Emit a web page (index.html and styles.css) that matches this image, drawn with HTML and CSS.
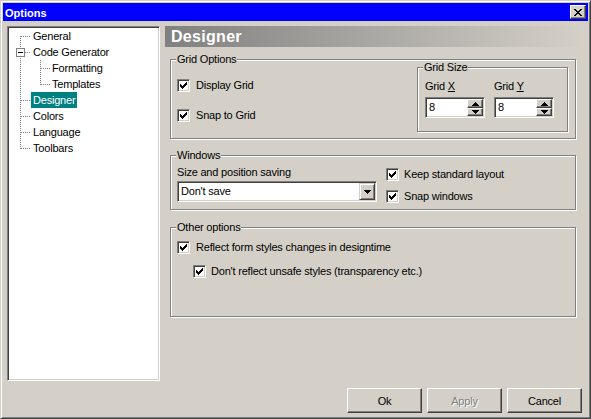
FILE: index.html
```html
<!DOCTYPE html>
<html>
<head>
<meta charset="utf-8">
<title>Options</title>
<link rel="stylesheet" href="styles.css">
</head>
<body>
<div class="window">
  <div class="titlebar">
    <span class="title">Options</span>
    <button class="close" type="button"><svg width="8" height="7" viewBox="0 0 8 7"><path d="M0 0h2v1H0zM6 0h2v1H6zM1 1h2v1H1zM5 1h2v1H5zM2 2h4v1H2zM3 3h2v1H3zM2 4h4v1H2zM1 5h2v1H1zM5 5h2v1H5zM0 6h2v1H0zM6 6h2v1H6z"/></svg></button>
  </div>
  <div class="client">
    <div class="main">
      <div class="tree">
        <div class="row">
          <svg class="tl" width="22" height="16"><line x1="11.5" y1="8" x2="11.5" y2="16"/><line x1="12" y1="8.5" x2="22" y2="8.5"/></svg>
          <span class="label">General</span>
        </div>
        <div class="row">
          <svg class="tl" width="22" height="16"><line x1="11.5" y1="0" x2="11.5" y2="4"/><line x1="11.5" y1="14" x2="11.5" y2="16"/><line x1="16" y1="8.5" x2="22" y2="8.5"/><rect class="box" x="7.5" y="4.5" width="8" height="8"/><rect class="minus" x="9" y="8" width="5" height="1"/></svg>
          <span class="label">Code Generator</span>
        </div>
        <div class="row">
          <svg class="tl" width="41" height="16"><line x1="11.5" y1="0" x2="11.5" y2="16"/><line x1="31.5" y1="0" x2="31.5" y2="16"/><line x1="32" y1="8.5" x2="41" y2="8.5"/></svg>
          <span class="label">Formatting</span>
        </div>
        <div class="row">
          <svg class="tl" width="41" height="16"><line x1="11.5" y1="0" x2="11.5" y2="16"/><line x1="31.5" y1="0" x2="31.5" y2="9"/><line x1="32" y1="8.5" x2="41" y2="8.5"/></svg>
          <span class="label">Templates</span>
        </div>
        <div class="row">
          <svg class="tl" width="22" height="16"><line x1="11.5" y1="0" x2="11.5" y2="16"/><line x1="12" y1="8.5" x2="22" y2="8.5"/></svg>
          <span class="label selected">Designer</span>
        </div>
        <div class="row">
          <svg class="tl" width="22" height="16"><line x1="11.5" y1="0" x2="11.5" y2="16"/><line x1="12" y1="8.5" x2="22" y2="8.5"/></svg>
          <span class="label">Colors</span>
        </div>
        <div class="row">
          <svg class="tl" width="22" height="16"><line x1="11.5" y1="0" x2="11.5" y2="16"/><line x1="12" y1="8.5" x2="22" y2="8.5"/></svg>
          <span class="label">Language</span>
        </div>
        <div class="row">
          <svg class="tl" width="22" height="16"><line x1="11.5" y1="0" x2="11.5" y2="9"/><line x1="12" y1="8.5" x2="22" y2="8.5"/></svg>
          <span class="label">Toolbars</span>
        </div>
      </div>

      <div class="panel">
        <div class="header">Designer</div>

        <div class="group g-grid">
          <span class="gtitle">Grid Options</span>
          <div class="gbody">
            <div class="checks">
              <label class="chk"><span class="cb"><svg width="11" height="11" viewBox="0 0 11 11"><path d="M2 4h1v3H2zM3 5h1v3H3zM4 6h1v3H4zM5 5h1v3H5zM6 4h1v3H6zM7 3h1v3H7zM8 2h1v3H8z"/></svg></span><span>Display Grid</span></label>
              <label class="chk"><span class="cb"><svg width="11" height="11" viewBox="0 0 11 11"><path d="M2 4h1v3H2zM3 5h1v3H3zM4 6h1v3H4zM5 5h1v3H5zM6 4h1v3H6zM7 3h1v3H7zM8 2h1v3H8z"/></svg></span><span>Snap to Grid</span></label>
            </div>
            <div class="group g-size">
              <span class="gtitle">Grid Size</span>
              <div class="sizes">
                <div class="sfield">
                  <span class="flabel">Grid <u>X</u></span>
                  <div class="edit">
                    <span class="etext">8</span>
                    <span class="spin">
                      <span class="sb up"><svg width="7" height="4" viewBox="0 0 7 4"><path d="M3 0h1v1H3zM2 1h3v1H2zM1 2h5v1H1zM0 3h7v1H0z"/></svg></span>
                      <span class="sb down"><svg width="7" height="4" viewBox="0 0 7 4"><path d="M0 0h7v1H0zM1 1h5v1H1zM2 2h3v1H2zM3 3h1v1H3z"/></svg></span>
                    </span>
                  </div>
                </div>
                <div class="sfield">
                  <span class="flabel">Grid <u>Y</u></span>
                  <div class="edit">
                    <span class="etext">8</span>
                    <span class="spin">
                      <span class="sb up"><svg width="7" height="4" viewBox="0 0 7 4"><path d="M3 0h1v1H3zM2 1h3v1H2zM1 2h5v1H1zM0 3h7v1H0z"/></svg></span>
                      <span class="sb down"><svg width="7" height="4" viewBox="0 0 7 4"><path d="M0 0h7v1H0zM1 1h5v1H1zM2 2h3v1H2zM3 3h1v1H3z"/></svg></span>
                    </span>
                  </div>
                </div>
              </div>
            </div>
          </div>
        </div>

        <div class="group g-win">
          <span class="gtitle">Windows</span>
          <div class="gbody">
            <div class="wleft">
              <span class="flabel">Size and position saving</span>
              <div class="combo">
                <span class="etext">Don't save</span>
                <span class="cbtn"><svg width="7" height="4" viewBox="0 0 7 4"><path d="M0 0h7v1H0zM1 1h5v1H1zM2 2h3v1H2zM3 3h1v1H3z"/></svg></span>
              </div>
            </div>
            <div class="wright">
              <label class="chk"><span class="cb"><svg width="11" height="11" viewBox="0 0 11 11"><path d="M2 4h1v3H2zM3 5h1v3H3zM4 6h1v3H4zM5 5h1v3H5zM6 4h1v3H6zM7 3h1v3H7zM8 2h1v3H8z"/></svg></span><span>Keep standard layout</span></label>
              <label class="chk"><span class="cb"><svg width="11" height="11" viewBox="0 0 11 11"><path d="M2 4h1v3H2zM3 5h1v3H3zM4 6h1v3H4zM5 5h1v3H5zM6 4h1v3H6zM7 3h1v3H7zM8 2h1v3H8z"/></svg></span><span>Snap windows</span></label>
            </div>
          </div>
        </div>

        <div class="group g-other">
          <span class="gtitle">Other options</span>
          <label class="chk c-reflect"><span class="cb"><svg width="11" height="11" viewBox="0 0 11 11"><path d="M2 4h1v3H2zM3 5h1v3H3zM4 6h1v3H4zM5 5h1v3H5zM6 4h1v3H6zM7 3h1v3H7zM8 2h1v3H8z"/></svg></span><span>Reflect form styles changes in designtime</span></label>
          <label class="chk c-unsafe"><span class="cb"><svg width="11" height="11" viewBox="0 0 11 11"><path d="M2 4h1v3H2zM3 5h1v3H3zM4 6h1v3H4zM5 5h1v3H5zM6 4h1v3H6zM7 3h1v3H7zM8 2h1v3H8z"/></svg></span><span>Don't reflect unsafe styles (transparency etc.)</span></label>
        </div>
      </div>
    </div>

    <div class="buttons">
      <button class="btn" type="button">Ok</button>
      <button class="btn disabled" type="button">Apply</button>
      <button class="btn" type="button">Cancel</button>
    </div>
  </div>
</div>
</body>
</html>
```

FILE: styles.css
```css
* { box-sizing: border-box; }
html, body { margin: 0; padding: 0; }
body {
  background: #d4d0c8;
  font-family: "Liberation Sans", Arial, sans-serif;
  font-size: 11px;
  letter-spacing: -0.2px;
  color: #000;
}

.window {
  width: 591px;
  height: 419px;
  border: 1px solid;
  border-color: #d4d0c8 #404040 #404040 #d4d0c8;
  box-shadow: inset 1px 1px 0 #fff, inset -1px -1px 0 #808080;
  padding: 2px;
  background: #d4d0c8;
  display: flex;
  flex-direction: column;
}

.titlebar {
  height: 18px;
  background: #0000ff;
  display: flex;
  align-items: center;
  justify-content: space-between;
  flex: none;
}
.title {
  color: #fff;
  font-weight: bold;
  letter-spacing: 0;
  line-height: 16px;
  padding: 2px 0 0 2px;
  align-self: flex-start;
}
.close {
  width: 16px;
  height: 14px;
  margin: 0 2px 0 0;
  padding: 0;
  background: #d4d0c8;
  border: 1px solid;
  border-color: #fff #404040 #404040 #fff;
  box-shadow: inset -1px -1px 0 #808080;
  display: flex;
  align-items: center;
  justify-content: center;
}
.close svg { display: block; fill: #000; margin-left: -1px; }

.client {
  flex: 1;
  display: flex;
  flex-direction: column;
  padding: 5px 6px 3px 4px;
}

.main {
  height: 355px;
  display: flex;
  gap: 5px;
  flex: none;
}

/* Tree */
.tree {
  width: 153px;
  height: 355px;
  background: #fff;
  border: 1px solid;
  border-color: #808080 #fff #fff #808080;
  box-shadow: inset 1px 1px 0 #404040, inset -1px -1px 0 #d4d0c8;
  padding: 1px;
  flex: none;
}
.row {
  height: 16px;
  display: flex;
  align-items: flex-start;
}
.tl { display: block; flex: none; }
.tl line {
  stroke: #808080;
  stroke-width: 1;
  stroke-dasharray: 1 1;
  shape-rendering: crispEdges;
}
.tl .box { fill: #fff; stroke: #808080; stroke-width: 1; shape-rendering: crispEdges; }
.tl .minus { fill: #000; }
.label {
  line-height: 16px;
  padding: 0 2px;
  white-space: nowrap;
}
.label.selected {
  background: #008080;
  color: #fff;
}

/* Right panel */
.panel {
  width: 417px;
  display: flex;
  flex-direction: column;
}
.header {
  height: 21px;
  padding: 1px 0 0 6px;
  line-height: 20px;
  background: linear-gradient(to right, #808080, #d4d0c8);
  color: #fff;
  font-weight: bold;
  font-size: 16px;
  letter-spacing: 0.3px;
  flex: none;
}

.group {
  border: 1px solid #808080;
  box-shadow: inset 1px 1px 0 #fff, 1px 1px 0 #fff;
  margin: 0 6px 0 5px;
  display: flex;
  flex-direction: column;
}
.gtitle {
  display: block;
  width: max-content;
  margin: -7px 0 0 5px;
  padding: 0 1px;
  line-height: 13px;
  background: #d4d0c8;
}
.gbody { display: flex; }

.g-grid { height: 80px; margin-top: 12px; }
.g-grid .gbody { justify-content: space-between; }
.checks {
  display: flex;
  flex-direction: column;
  gap: 17px;
  padding-left: 6px;
  margin-top: 13px;
}

.chk {
  display: flex;
  align-items: center;
  gap: 6px;
  height: 13px;
  line-height: 13px;
  white-space: nowrap;
}
.cb {
  display: block;
  width: 13px;
  height: 13px;
  background: #fff;
  border: 1px solid;
  border-color: #808080 #fff #fff #808080;
  box-shadow: inset 1px 1px 0 #404040, inset -1px -1px 0 #d4d0c8;
  flex: none;
}
.cb svg { display: block; fill: #000; }

.g-size {
  width: 151px;
  height: 65px;
  margin: 1px 7px 0 0;
  flex: none;
}
.sizes {
  display: flex;
  gap: 9px;
  padding-left: 7px;
  margin-top: 6px;
}
.sfield { width: 60px; display: flex; flex-direction: column; }
.flabel { line-height: 13px; display: block; white-space: nowrap; }

.edit, .combo {
  height: 21px;
  margin-top: 4px;
  background: #fff;
  border: 1px solid;
  border-color: #808080 #fff #fff #808080;
  box-shadow: inset 1px 1px 0 #404040, inset -1px -1px 0 #d4d0c8;
  padding: 1px;
  display: flex;
  align-items: stretch;
}
.etext {
  flex: 1;
  padding-left: 2px;
  line-height: 17px;
  white-space: nowrap;
}
.spin {
  width: 16px;
  display: flex;
  flex-direction: column;
}
.sb {
  background: #d4d0c8;
  border: 1px solid;
  border-color: #fff #404040 #404040 #fff;
  box-shadow: inset -1px -1px 0 #808080;
  display: flex;
  align-items: center;
  justify-content: center;
}
.sb.up { height: 9px; }
.sb.down { height: 8px; }
.sb svg { display: block; fill: #000; }

.g-win { height: 55px; margin-top: 16px; }
.wleft { padding-left: 6px; }
.wleft .flabel { margin-top: 4px; }
.combo { width: 200px; margin-top: 2px; }
.cbtn {
  width: 16px;
  background: #d4d0c8;
  border: 1px solid;
  border-color: #d4d0c8 #404040 #404040 #d4d0c8;
  box-shadow: inset 1px 1px 0 #fff, inset -1px -1px 0 #808080;
  display: flex;
  align-items: center;
  justify-content: center;
}
.cbtn svg { display: block; fill: #000; }
.wright {
  margin-left: 9px;
  margin-top: 6px;
  display: flex;
  flex-direction: column;
  gap: 9px;
}
.wright .chk { gap: 5px; }

.g-other { height: 90px; margin-top: 17px; }
.c-reflect { margin: 7px 0 0 6px; }
.c-unsafe { margin: 11px 0 0 22px; gap: 5px; }

/* Buttons */
.buttons {
  display: flex;
  justify-content: flex-end;
  gap: 5px;
  margin-top: 7px;
}
.btn {
  width: 75px;
  height: 25px;
  padding: 0;
  font: inherit;
  letter-spacing: inherit;
  color: #000;
  background: #d4d0c8;
  border: 1px solid;
  border-color: #fff #404040 #404040 #fff;
  box-shadow: inset -1px -1px 0 #808080;
}
.btn.disabled {
  color: #808080;
  text-shadow: 1px 1px 0 #fff;
}
```
